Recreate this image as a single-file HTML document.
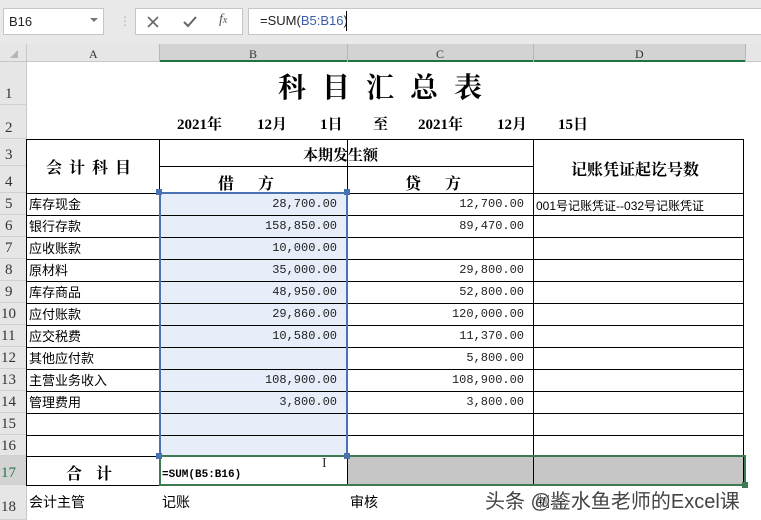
<!DOCTYPE html>
<html><head><meta charset="utf-8"><style>
*{margin:0;padding:0;box-sizing:border-box}
body{width:761px;height:520px;overflow:hidden;background:#fff;position:relative;font-family:"Liberation Sans","Noto Sans CJK SC",sans-serif}
.a{position:absolute}
.h{position:absolute;height:1px;background:#000}
.v{position:absolute;width:1px;background:#000}
.rn{position:absolute;left:0;width:26px;font-family:"Liberation Serif","Noto Serif CJK SC",serif;font-size:15px;color:#333;padding-left:5px;border-bottom:1px solid #d0d0d0;background:#e6e6e6}
.t{position:absolute;font-size:13px;color:#000;white-space:nowrap;font-family:"Liberation Sans","Noto Sans CJK SC",sans-serif}
.n{position:absolute;font-family:"Liberation Mono","Noto Sans CJK SC",monospace;font-size:12px;color:#222;text-align:right;white-space:nowrap}
.b{font-family:"Liberation Serif","Noto Serif CJK SC",serif;font-weight:bold;color:#000;position:absolute;white-space:nowrap}
</style></head><body>
<div class="a" style="left:0;top:0;width:761px;height:44px;background:#e9e9e9"></div>
<div class="a" style="left:3px;top:8px;width:101px;height:27px;background:#fff;border:1px solid #c6c6c6"></div>
<div class="t" style="left:9px;top:14px;font-size:13px;color:#222">B16</div>
<div class="a" style="left:90px;top:18px;width:0;height:0;border-left:4px solid transparent;border-right:4px solid transparent;border-top:4px solid #777"></div>
<div class="a" style="left:119px;top:14px;color:#aaa;font-size:12px">⋮</div>
<div class="a" style="left:135px;top:8px;width:108px;height:27px;background:#fff;border:1px solid #c6c6c6"></div>
<svg class="a" style="left:146px;top:15px" width="14" height="14"><path d="M2 2L12 12M12 2L2 12" stroke="#666" stroke-width="1.6"/></svg>
<svg class="a" style="left:182px;top:15px" width="16" height="14"><path d="M2 7L6 11L14 2" stroke="#666" stroke-width="2" fill="none"/></svg>
<div class="a" style="left:219px;top:12px;font-size:14px;font-style:italic;color:#555;font-family:'Liberation Serif',serif">f<span style="font-size:10px">x</span></div>
<div class="a" style="left:248px;top:8px;width:513px;height:27px;background:#fff;border:1px solid #c6c6c6;border-right:none"></div>
<div class="t" style="left:260px;top:13px;font-size:13px;color:#222">=SUM(<span style="color:#3a5da8">B5:B16</span>)</div>
<div class="a" style="left:346px;top:11px;width:1px;height:20px;background:#000"></div>
<div class="a" style="left:0;top:44px;width:761px;height:18px;background:#e6e6e6;border-bottom:1px solid #c8c8c8"></div>
<div class="a" style="left:159px;top:44px;width:586px;height:18px;background:#d3d3d3;border-bottom:2px solid #217346"></div>
<div class="v" style="left:26px;top:44px;height:18px;background:#c8c8c8"></div>
<div class="v" style="left:159px;top:44px;height:18px;background:#b8b8b8"></div>
<div class="v" style="left:347px;top:44px;height:18px;background:#b8b8b8"></div>
<div class="v" style="left:533px;top:44px;height:18px;background:#b8b8b8"></div>
<div class="v" style="left:745px;top:44px;height:18px;background:#b8b8b8"></div>
<div class="a" style="left:10px;top:50px;width:0;height:0;border-left:8px solid transparent;border-bottom:8px solid #b5b5b5"></div>
<div class="t" style="left:89px;top:47px;font-size:12px;color:#333;font-family:'Liberation Serif',serif">A</div>
<div class="t" style="left:249px;top:47px;font-size:12px;color:#333;font-family:'Liberation Serif',serif">B</div>
<div class="t" style="left:436px;top:47px;font-size:12px;color:#333;font-family:'Liberation Serif',serif">C</div>
<div class="t" style="left:635px;top:47px;font-size:12px;color:#333;font-family:'Liberation Serif',serif">D</div>
<div class="rn" style="top:62px;height:43px;padding-top:24px">1</div>
<div class="rn" style="top:105px;height:34px;padding-top:15px">2</div>
<div class="rn" style="top:139px;height:27px;padding-top:8px">3</div>
<div class="rn" style="top:166px;height:27px;padding-top:8px">4</div>
<div class="rn" style="top:193px;height:22px;padding-top:3px">5</div>
<div class="rn" style="top:215px;height:22px;padding-top:3px">6</div>
<div class="rn" style="top:237px;height:22px;padding-top:3px">7</div>
<div class="rn" style="top:259px;height:22px;padding-top:3px">8</div>
<div class="rn" style="top:281px;height:22px;padding-top:3px">9</div>
<div class="rn" style="top:303px;height:22px;padding-top:3px;padding-left:1px">10</div>
<div class="rn" style="top:325px;height:22px;padding-top:3px;padding-left:1px">11</div>
<div class="rn" style="top:347px;height:22px;padding-top:3px;padding-left:1px">12</div>
<div class="rn" style="top:369px;height:22px;padding-top:3px;padding-left:1px">13</div>
<div class="rn" style="top:391px;height:22px;padding-top:3px;padding-left:1px">14</div>
<div class="rn" style="top:413px;height:22px;padding-top:3px;padding-left:1px">15</div>
<div class="rn" style="top:435px;height:21px;padding-top:3px;padding-left:1px">16</div>
<div class="rn" style="top:456px;height:29px;padding-top:9px;padding-left:1px;background:#d3d3d3;color:#217346">17</div>
<div class="rn" style="top:485px;height:35px;padding-top:14px;padding-left:1px">18</div>
<div class="v" style="left:26px;top:62px;height:458px;background:#c8c8c8"></div>
<div class="b" style="left:278px;top:66px;font-size:28px;letter-spacing:16px">科目汇总表</div>
<div class="b" style="left:177px;top:113px;font-size:15px">2021年</div>
<div class="b" style="left:257px;top:113px;font-size:15px">12月</div>
<div class="b" style="left:320px;top:113px;font-size:15px">1日</div>
<div class="b" style="left:373px;top:113px;font-size:15px">至</div>
<div class="b" style="left:418px;top:113px;font-size:15px">2021年</div>
<div class="b" style="left:497px;top:113px;font-size:15px">12月</div>
<div class="b" style="left:558px;top:113px;font-size:15px">15日</div>
<div class="a" style="left:159px;top:193px;width:188px;height:263px;background:#e7eef9"></div>
<div class="a" style="left:347px;top:456px;width:398px;height:29px;background:#c6c6c6"></div>
<div class="h" style="left:26px;top:139px;width:718px"></div>
<div class="h" style="left:159px;top:166px;width:374px"></div>
<div class="h" style="left:26px;top:193px;width:718px"></div>
<div class="h" style="left:26px;top:215px;width:718px"></div>
<div class="h" style="left:26px;top:237px;width:718px"></div>
<div class="h" style="left:26px;top:259px;width:718px"></div>
<div class="h" style="left:26px;top:281px;width:718px"></div>
<div class="h" style="left:26px;top:303px;width:718px"></div>
<div class="h" style="left:26px;top:325px;width:718px"></div>
<div class="h" style="left:26px;top:347px;width:718px"></div>
<div class="h" style="left:26px;top:369px;width:718px"></div>
<div class="h" style="left:26px;top:391px;width:718px"></div>
<div class="h" style="left:26px;top:413px;width:718px"></div>
<div class="h" style="left:26px;top:435px;width:718px"></div>
<div class="h" style="left:26px;top:456px;width:718px"></div>
<div class="h" style="left:26px;top:485px;width:134px"></div>
<div class="v" style="left:26px;top:139px;height:347px"></div>
<div class="v" style="left:159px;top:139px;height:347px"></div>
<div class="v" style="left:347px;top:139px;height:347px"></div>
<div class="v" style="left:533px;top:139px;height:347px"></div>
<div class="v" style="left:743px;top:139px;height:347px"></div>
<div class="a" style="left:159px;top:192px;width:189px;height:265px;border:2px solid #4a72b0"></div>
<div class="a" style="left:159px;top:455px;width:587px;height:31px;border:2px solid #3e7a52"></div>
<div class="a" style="left:156px;top:189px;width:6px;height:6px;background:#4a72b0"></div>
<div class="a" style="left:344px;top:189px;width:6px;height:6px;background:#4a72b0"></div>
<div class="a" style="left:156px;top:453px;width:6px;height:6px;background:#4a72b0"></div>
<div class="a" style="left:344px;top:453px;width:6px;height:6px;background:#4a72b0"></div>
<div class="a" style="left:742px;top:482px;width:6px;height:6px;background:#3e7a52"></div>
<div class="b" style="left:46px;top:155px;font-size:16px;letter-spacing:7px">会计科目</div>
<div class="b" style="left:303px;top:144px;font-size:15px">本期发生额</div>
<div class="b" style="left:218px;top:171px;font-size:16px">借&nbsp;&nbsp;&nbsp;&nbsp;&nbsp;&nbsp;方</div>
<div class="b" style="left:405px;top:171px;font-size:16px">贷&nbsp;&nbsp;&nbsp;&nbsp;&nbsp;&nbsp;方</div>
<div class="b" style="left:571px;top:157px;font-size:16px">记账凭证起讫号数</div>
<div class="t" style="left:29px;top:194px">库存现金</div>
<div class="t" style="left:29px;top:216px">银行存款</div>
<div class="t" style="left:29px;top:238px">应收账款</div>
<div class="t" style="left:29px;top:260px">原材料</div>
<div class="t" style="left:29px;top:282px">库存商品</div>
<div class="t" style="left:29px;top:304px">应付账款</div>
<div class="t" style="left:29px;top:326px">应交税费</div>
<div class="t" style="left:29px;top:348px">其他应付款</div>
<div class="t" style="left:29px;top:370px">主营业务收入</div>
<div class="t" style="left:29px;top:392px">管理费用</div>
<div class="n" style="right:424px;top:197px">28,700.00</div>
<div class="n" style="right:424px;top:219px">158,850.00</div>
<div class="n" style="right:424px;top:241px">10,000.00</div>
<div class="n" style="right:424px;top:263px">35,000.00</div>
<div class="n" style="right:424px;top:285px">48,950.00</div>
<div class="n" style="right:424px;top:307px">29,860.00</div>
<div class="n" style="right:424px;top:329px">10,580.00</div>
<div class="n" style="right:424px;top:373px">108,900.00</div>
<div class="n" style="right:424px;top:395px">3,800.00</div>
<div class="n" style="right:237px;top:197px">12,700.00</div>
<div class="n" style="right:237px;top:219px">89,470.00</div>
<div class="n" style="right:237px;top:263px">29,800.00</div>
<div class="n" style="right:237px;top:285px">52,800.00</div>
<div class="n" style="right:237px;top:307px">120,000.00</div>
<div class="n" style="right:237px;top:329px">11,370.00</div>
<div class="n" style="right:237px;top:351px">5,800.00</div>
<div class="n" style="right:237px;top:373px">108,900.00</div>
<div class="n" style="right:237px;top:395px">3,800.00</div>
<div class="t" style="left:536px;top:197px;font-size:12px">001号记账凭证--032号记账凭证</div>
<div class="b" style="left:66px;top:461px;font-size:16px;letter-spacing:14px">合计</div>
<div class="t" style="left:162px;top:469px;font-size:11px;font-weight:bold;font-family:'Liberation Mono',monospace">=SUM(B5:B16)</div>
<div class="a" style="left:322px;top:456px;font-size:14px;color:#333;font-family:'Liberation Serif',serif">I</div>
<div class="t" style="left:29px;top:492px;font-size:14px">会计主管</div>
<div class="t" style="left:162px;top:492px;font-size:14px">记账</div>
<div class="t" style="left:350px;top:492px;font-size:14px">审核</div>
<div class="t" style="left:536px;top:492px;font-size:14px">制表</div>
<div class="t" style="left:485px;top:485px;font-size:20px;color:#444;text-shadow:0 0 2px #fff,0 0 2px #fff,0 0 1px #fff">头条 @鉴水鱼老师的Excel课</div>
</body></html>
